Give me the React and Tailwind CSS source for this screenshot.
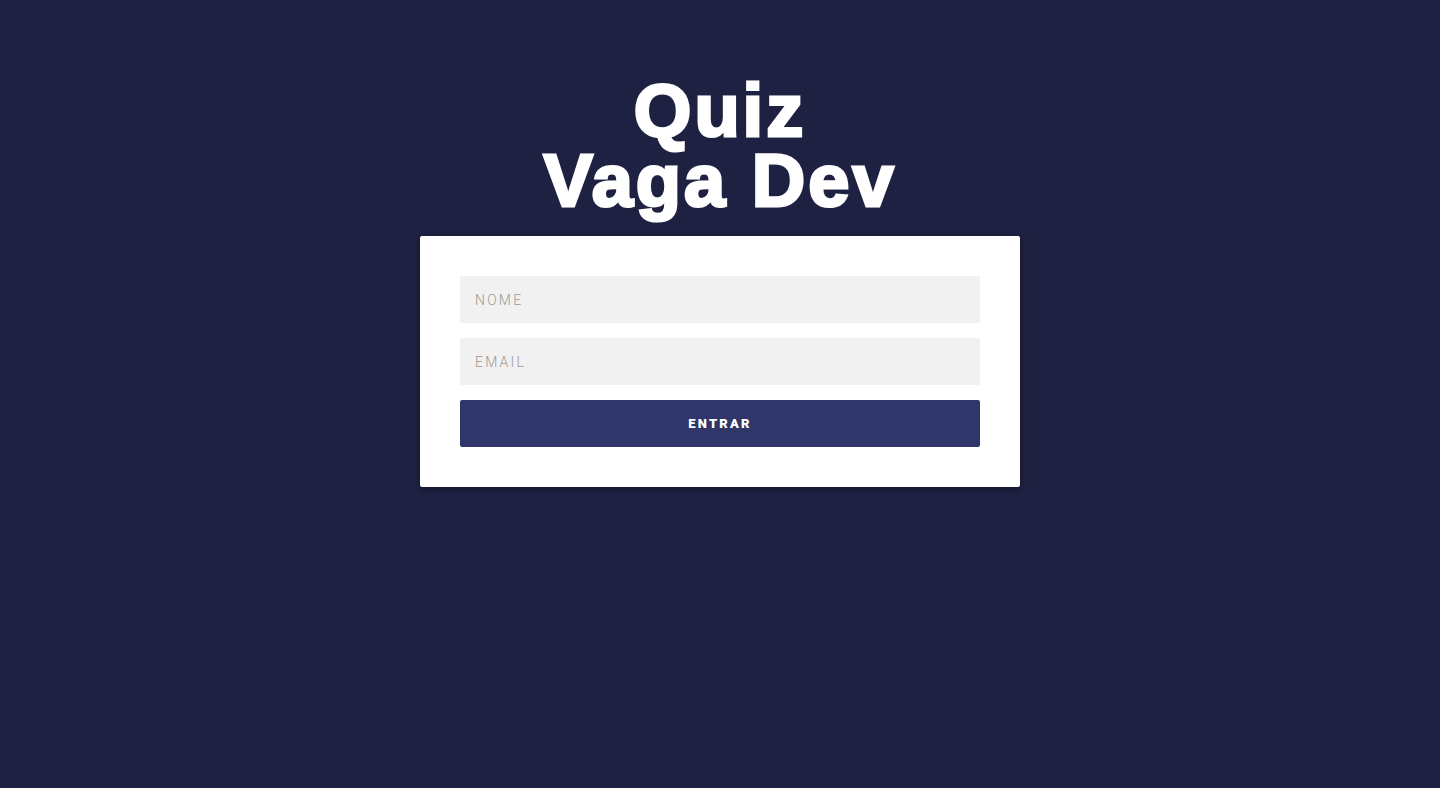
export default function App() {
  return (
    <div className="min-h-[788px] w-full bg-[#1f2142] flex flex-col items-center pt-[76px]">
      <h1 className="text-white text-center font-bold font-['Liberation_Sans',Arial,sans-serif] text-[74px] leading-[70px] [-webkit-text-stroke:3px_white] tracking-[3px]">
        Quiz
        <br />
        Vaga Dev
      </h1>
      <div className="mt-[20px] w-[600px] bg-white rounded-[2px] p-10 shadow-[0_2px_6px_rgba(0,0,0,0.35)] flex flex-col gap-[15px] font-['Roboto','Noto_Sans',sans-serif]">
        <input
          type="text"
          placeholder="NOME"
          className="h-[47px] w-full bg-[#f1f1f1] rounded-[2px] px-[15px] text-[14px] font-light tracking-[2.2px] text-[#555] placeholder:text-[#9e9992] outline-none"
        />
        <input
          type="text"
          placeholder="EMAIL"
          className="h-[47px] w-full bg-[#f1f1f1] rounded-[2px] px-[15px] text-[14px] font-light tracking-[2.2px] text-[#555] placeholder:text-[#9e9992] outline-none"
        />
        <button className="h-[47px] w-full bg-[#303669] rounded-[2px] text-white font-black text-[13px] tracking-[2.2px]">
          ENTRAR
        </button>
      </div>
    </div>
  );
}
